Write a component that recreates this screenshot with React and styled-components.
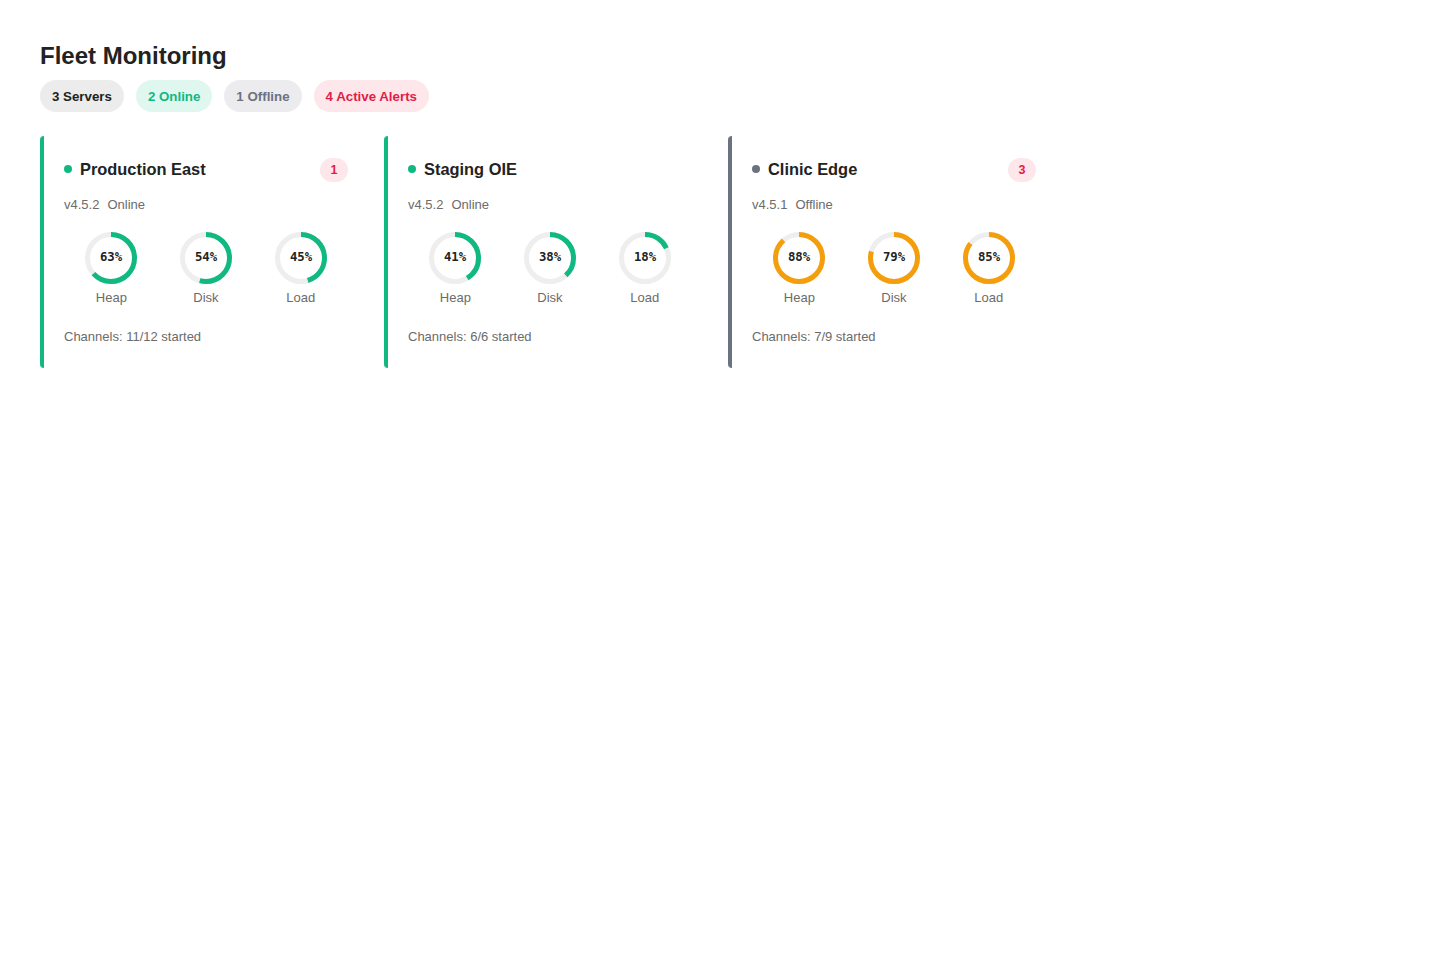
import React from "react";
import styled, { createGlobalStyle } from "styled-components";

const GlobalStyle = createGlobalStyle`
  body {
    margin: 0;
    background: #ffffff;
    font-family: "Liberation Sans", Arial, sans-serif;
    color: #1f2328;
  }
`;

const Page = styled.div`
  padding: 40px;
`;

const Title = styled.h1`
  margin: 0 0 8px;
  font-size: 24px;
  font-weight: 700;
  color: #222;
  line-height: 32px;
`;

const PillRow = styled.div`
  display: flex;
  gap: 12px;
  margin-bottom: 24px;
`;

const pillColors = {
  neutral: ["#ececec", "#222"],
  online: ["#dff7ee", "#10b981"],
  offline: ["#ececee", "#6b7280"],
  alert: ["#fde7ea", "#e11d48"],
};

const Pill = styled.span`
  display: inline-flex;
  align-items: center;
  height: 32px;
  padding: 0 12px;
  border-radius: 16px;
  font-size: 13.3px;
  font-weight: 700;
  background: ${(p) => pillColors[p.$kind][0]};
  color: ${(p) => pillColors[p.$kind][1]};
`;

const Grid = styled.div`
  display: grid;
  grid-template-columns: repeat(auto-fill, minmax(320px, 1fr));
  gap: 16px;
`;

const Card = styled.div`
  background: #fff;
  border-left: 4px solid ${(p) => p.$color};
  border-radius: 4px;
  padding: 20px;
  height: 232px;
  box-sizing: border-box;
`;

const CardHead = styled.div`
  display: flex;
  align-items: center;
  justify-content: space-between;
  height: 26px;
`;

const Name = styled.div`
  display: flex;
  align-items: center;
  gap: 8px;
  font-size: 16.4px;
  font-weight: 700;
  color: #222;
`;

const Dot = styled.span`
  width: 8px;
  height: 8px;
  border-radius: 50%;
  background: ${(p) => p.$color};
`;

const AlertBadge = styled.span`
  display: inline-flex;
  align-items: center;
  justify-content: center;
  min-width: 28px;
  height: 24px;
  margin-top: 2px;
  box-sizing: border-box;
  border-radius: 12px;
  background: #fde7ea;
  color: #e11d48;
  font-size: 12.5px;
  font-weight: 700;
`;

const Meta = styled.div`
  margin-top: 15px;
  font-size: 13px;
  line-height: 16px;
  color: #6b6b6b;
  display: flex;
  gap: 8px;
`;

const Gauges = styled.div`
  display: grid;
  grid-template-columns: repeat(3, 1fr);
  margin-top: 19px;
`;

const Gauge = styled.div`
  display: flex;
  flex-direction: column;
  align-items: center;
`;

const GaugeLabel = styled.div`
  margin-top: 6px;
  font-size: 13px;
  line-height: 16px;
  color: #6b6b6b;
`;

const Channels = styled.div`
  margin-top: 23px;
  font-size: 13px;
  line-height: 16px;
  color: #6b6b6b;
`;

function Ring({ value, color }) {
  const r = 23.5;
  const c = 2 * Math.PI * r;
  return (
    <svg width="52" height="52" viewBox="0 0 52 52" style={{ display: "block" }}>
      <circle cx="26" cy="26" r={r} fill="none" stroke="#eeeeee" strokeWidth="5" />
      <circle
        cx="26"
        cy="26"
        r={r}
        fill="none"
        stroke={color}
        strokeWidth="5"
        strokeDasharray={`${(c * value) / 100} ${c}`}
        transform="rotate(-90 26 26)"
      />
      <text
        x="26"
        y="29"
        textAnchor="middle"
        fontSize="12.3"
        fontWeight="700"
        fill="#222"
        fontFamily="'DejaVu Sans Mono', monospace"
      >
        {value}%
      </text>
    </svg>
  );
}

const servers = [
  {
    name: "Production East",
    version: "v4.5.2",
    status: "Online",
    alerts: 1,
    heap: 63,
    disk: 54,
    load: 45,
    channels: "11/12",
  },
  {
    name: "Staging OIE",
    version: "v4.5.2",
    status: "Online",
    alerts: 0,
    heap: 41,
    disk: 38,
    load: 18,
    channels: "6/6",
  },
  {
    name: "Clinic Edge",
    version: "v4.5.1",
    status: "Offline",
    alerts: 3,
    heap: 88,
    disk: 79,
    load: 85,
    channels: "7/9",
  },
];

const gaugeColor = (v) => (v >= 75 ? "#f59e0b" : "#10b981");

export default function App() {
  return (
    <Page>
      <GlobalStyle />
      <Title>Fleet Monitoring</Title>
      <PillRow>
        <Pill $kind="neutral">3 Servers</Pill>
        <Pill $kind="online">2 Online</Pill>
        <Pill $kind="offline">1 Offline</Pill>
        <Pill $kind="alert">4 Active Alerts</Pill>
      </PillRow>
      <Grid>
        {servers.map((s) => {
          const statusColor = s.status === "Online" ? "#10b981" : "#6b7280";
          return (
            <Card key={s.name} $color={statusColor}>
              <CardHead>
                <Name>
                  <Dot $color={statusColor} />
                  {s.name}
                </Name>
                {s.alerts > 0 && <AlertBadge>{s.alerts}</AlertBadge>}
              </CardHead>
              <Meta>
                <span>{s.version}</span>
                <span>{s.status}</span>
              </Meta>
              <Gauges>
                {[
                  ["Heap", s.heap],
                  ["Disk", s.disk],
                  ["Load", s.load],
                ].map(([label, v]) => (
                  <Gauge key={label}>
                    <Ring value={v} color={gaugeColor(v)} />
                    <GaugeLabel>{label}</GaugeLabel>
                  </Gauge>
                ))}
              </Gauges>
              <Channels>Channels: {s.channels} started</Channels>
            </Card>
          );
        })}
      </Grid>
    </Page>
  );
}
